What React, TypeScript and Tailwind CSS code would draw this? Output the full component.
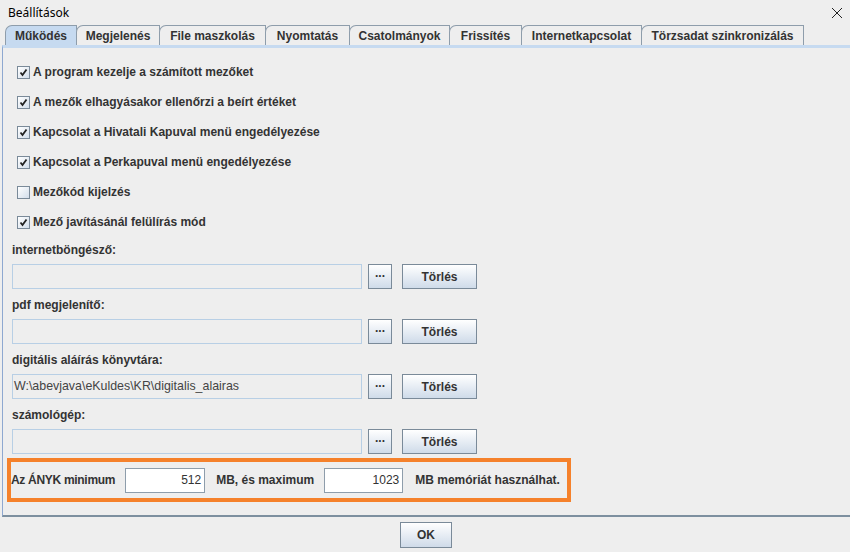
import React from 'react'

const tabs = [
  { label: 'Működés', w: 72 },
  { label: 'Megjelenés', w: 84 },
  { label: 'File maszkolás', w: 107 },
  { label: 'Nyomtatás', w: 85 },
  { label: 'Csatolmányok', w: 101 },
  { label: 'Frissítés', w: 73 },
  { label: 'Internetkapcsolat', w: 121 },
  { label: 'Törzsadat szinkronizálás', w: 163 },
]

const options = [
  { label: 'A program kezelje a számított mezőket', checked: true },
  { label: 'A mezők elhagyásakor ellenőrzi a beírt értéket', checked: true },
  { label: 'Kapcsolat a Hivatali Kapuval menü engedélyezése', checked: true },
  { label: 'Kapcsolat a Perkapuval menü engedélyezése', checked: true },
  { label: 'Mezőkód kijelzés', checked: false },
  { label: 'Mező javításánál felülírás mód', checked: true },
]

const paths = [
  { label: 'internetböngésző:', value: '' },
  { label: 'pdf megjelenítő:', value: '' },
  { label: 'digitális aláírás könyvtára:', value: 'W:\\abevjava\\eKuldes\\KR\\digitalis_alairas' },
  { label: 'számológép:', value: '' },
]

const btn =
  'flex items-center justify-center border border-[#7a8a99] bg-gradient-to-b from-[#ffffff] to-[#cfdbe9] text-[12px] font-bold text-[#333333]'

function CheckBox({ checked }: { checked: boolean }) {
  return (
    <div className="flex h-[13px] w-[13px] items-center justify-center border border-[#7a8a99] bg-gradient-to-br from-[#ffffff] to-[#d3deeb]">
      {checked && (
        <svg width="9" height="9" viewBox="0 0 9 9">
          <path d="M1.5 4.5 L3.5 7 L7.5 1.5" fill="none" stroke="#222" strokeWidth="1.8" />
        </svg>
      )}
    </div>
  )
}

export default function App() {
  return (
    <div className="flex h-[552px] w-[850px] flex-col overflow-hidden bg-[#eeeeee] font-['Liberation_Sans',Arial,sans-serif] text-[#333333]">
      {/* Title bar */}
      <div className="flex h-[25px] items-center justify-between pl-[8px] pr-[7px]">
        <span className="font-['Noto_Sans',sans-serif] text-[12px] leading-none text-black">Beállítások</span>
        <svg width="12" height="12" viewBox="0 0 12 12">
          <path d="M1 1 L11 11 M11 1 L1 11" stroke="#222" strokeWidth="1" />
        </svg>
      </div>

      {/* Tabs */}
      <div className="flex h-[20px] pl-[5px]">
        {tabs.map((t, i) => (
          <div
            key={t.label}
            style={{ width: t.w }}
            className={
              'flex items-center justify-center rounded-tl-[7px] border border-b-0 border-[#8e9dab] text-[12px] font-bold ' +
              (i === 0 ? 'bg-[#c6daf0]' : 'bg-[#eeeeee]') +
              (i > 0 ? ' -ml-px' : '')
            }
          >
            {t.label}
          </div>
        ))}
      </div>

      {/* Panel */}
      <div className="ml-[2px] flex h-[472px] flex-col border-t-[3px] border-l border-b-2 border-t-[#c6daf0] border-l-[#8ea8d0] border-b-[#7d8f9f] pl-[9px] pt-[9px]">
        {options.map((o) => (
          <div key={o.label} className="flex h-[30px] items-center gap-[3px] pl-[5px]">
            <CheckBox checked={o.checked} />
            <span className="text-[12px] font-bold">{o.label}</span>
          </div>
        ))}

        {paths.map((p) => (
          <div key={p.label} className="mb-[3px] flex flex-col">
            <div className="flex h-[26px] items-center text-[12px] font-bold">{p.label}</div>
            <div className="mt-px flex h-[25px] items-center">
              <div className="flex h-[25px] w-[350px] items-center border border-[#b8cfe5] bg-[#eeeeee] pl-[1px] text-[12.4px] text-[#444444]">
                {p.value}
              </div>
              <div className={btn + ' ml-[6px] h-[25px] w-[24px] items-end pb-[6px] text-[10px]'}>...</div>
              <div className={btn + ' ml-[10px] h-[25px] w-[75px]'}>Törlés</div>
            </div>
          </div>
        ))}

        <div className="-ml-[5px] mt-px flex h-[44px] w-[564px] items-center border-4 border-[#f5812b] text-[12px] font-bold">
          <span className="tracking-[-0.3px]">Az ÁNYK minimum</span>
          <div className="ml-[10px] flex h-[25px] w-[80px] items-center justify-end border border-[#8e9dab] bg-white pr-[3px] font-normal text-[#333]">
            512
          </div>
          <span className="ml-[11px]">MB, és maximum</span>
          <div className="ml-[10px] flex h-[25px] w-[79px] items-center justify-end border border-[#8e9dab] bg-white pr-[3px] font-normal text-[#333]">
            1023
          </div>
          <span className="ml-[12px]">MB memóriát használhat.</span>
        </div>
      </div>

      {/* Footer */}
      <div className="flex flex-1 items-start justify-center pt-[5px] pl-[2px]">
        <div className={btn + ' h-[26px] w-[52px]'}>OK</div>
      </div>
    </div>
  )
}
